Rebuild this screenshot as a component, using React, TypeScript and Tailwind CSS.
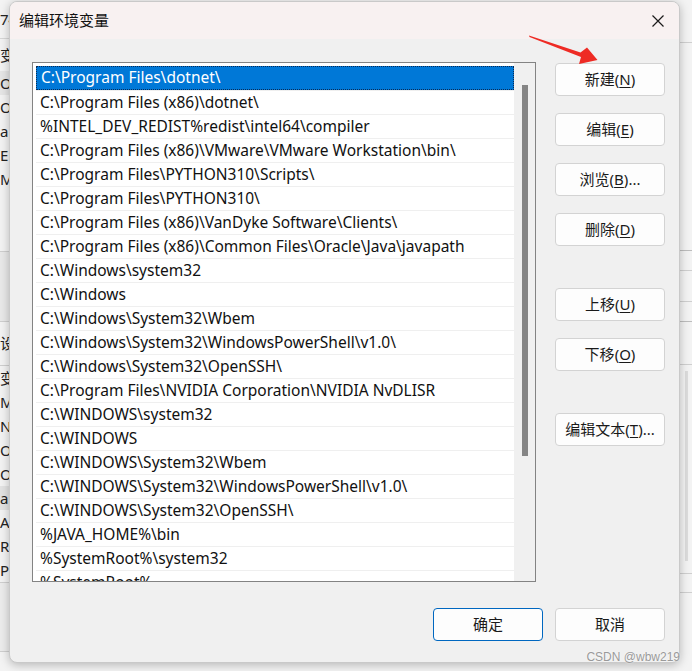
import React from 'react';

const paths = [
  'C:\\Program Files\\dotnet\\',
  'C:\\Program Files (x86)\\dotnet\\',
  '%INTEL_DEV_REDIST%redist\\intel64\\compiler',
  'C:\\Program Files (x86)\\VMware\\VMware Workstation\\bin\\',
  'C:\\Program Files\\PYTHON310\\Scripts\\',
  'C:\\Program Files\\PYTHON310\\',
  'C:\\Program Files (x86)\\VanDyke Software\\Clients\\',
  'C:\\Program Files (x86)\\Common Files\\Oracle\\Java\\javapath',
  'C:\\Windows\\system32',
  'C:\\Windows',
  'C:\\Windows\\System32\\Wbem',
  'C:\\Windows\\System32\\WindowsPowerShell\\v1.0\\',
  'C:\\Windows\\System32\\OpenSSH\\',
  'C:\\Program Files\\NVIDIA Corporation\\NVIDIA NvDLISR',
  'C:\\WINDOWS\\system32',
  'C:\\WINDOWS',
  'C:\\WINDOWS\\System32\\Wbem',
  'C:\\WINDOWS\\System32\\WindowsPowerShell\\v1.0\\',
  'C:\\WINDOWS\\System32\\OpenSSH\\',
  '%JAVA_HOME%\\bin',
  '%SystemRoot%\\system32',
  '%SystemRoot%',
];

// the slivers of the window behind the dialog
const userVars = ['Or', 'Or', 'a', 'E', 'M'];
const sysVars = ['变量', 'MI', 'NU', 'OP', 'OS', 'a', 'A', 'R', 'P'];

const Btn: React.FC<{ label: string; hot?: string; tail?: string; primary?: boolean; className?: string }> = ({
  label, hot, tail = '', primary, className = '',
}) => (
  <button
    className={`w-[110px] h-[33px] shrink-0 rounded-[4px] bg-[#fdfdfd] text-[15px] text-[#1a1a1a] flex items-center justify-center border ${
      primary ? 'border-[#0067c0]' : 'border-[#d3d3d3]'
    } ${className}`}
  >
    {label}
    {hot && (
      <>
        (<span className="underline underline-offset-2">{hot}</span>){tail}
      </>
    )}
  </button>
);

export default function App() {
  return (
    <div className="relative w-[692px] h-[671px] overflow-hidden bg-[#f0f0f0] font-['Noto_Sans','Noto_Sans_CJK_SC',sans-serif]">
      {/* window behind */}
      <div className="absolute inset-0 bg-[#f3f3f3] flex justify-between text-[15px] text-[#222] leading-none whitespace-nowrap">
        <div className="w-[10px] flex flex-col overflow-hidden">
          <div className="h-[39px] shrink-0 border-b border-[#d6d6d6] flex items-center">74</div>
          <div className="h-[32px] shrink-0 flex items-center">变量</div>
          {userVars.map((v, i) => (
            <div key={i} className={`h-[24px] shrink-0 flex items-center ${i === 0 ? 'bg-[#e6e6e6]' : ''}`}>
              {v}
            </div>
          ))}
          <div className="h-[61px] shrink-0 border-b border-[#cfcfcf]" />
          <div className="h-[70px] shrink-0 bg-[#e9e9e9] border-b border-[#cfcfcf]" />
          <div className="h-[44px] shrink-0 border-b border-[#cfcfcf] flex items-center">设置</div>
          {sysVars.map((v, i) => (
            <div key={i} className={`h-[24px] shrink-0 flex items-center ${i === 5 ? 'bg-[#e3e3e3]' : ''}`}>
              {v}
            </div>
          ))}
          <div className="h-[70px] shrink-0 border-y border-[#cfcfcf] bg-[#ececec]" />
        </div>
        <div className="w-[14px] flex flex-col">
          <div className="h-[43px] shrink-0 border-b border-[#cfcfcf]" />
          <div className="h-[208px] shrink-0 border-b border-[#bdbdbd]" />
          <div className="h-[20px] shrink-0 border-b border-[#cfcfcf]" />
          <div className="h-[31px] shrink-0 border-b border-[#cfcfcf]" />
          <div className="h-[20px] shrink-0 border-b border-[#bdbdbd]" />
          <div className="h-[43px] shrink-0 border-b border-[#cfcfcf]" />
          <div className="h-[208px] shrink-0 flex justify-end pr-[4px] pt-[6px]">
            <div className="w-[3px] h-[190px] bg-[#dcdcdc]" />
          </div>
          <div className="h-[20px] shrink-0 border-t border-b border-[#cfcfcf]" />
        </div>
      </div>

      {/* dialog */}
      <div className="absolute left-[9px] top-[1px] w-[671px] h-[662px] rounded-[8px] bg-[#f0f0f0] border border-[#c9c9c9] shadow-[0_2px_10px_rgba(0,0,0,0.25)] flex flex-col overflow-hidden">
        <div className="h-[37px] shrink-0 bg-[#f8f1f1] flex items-center justify-between pl-[9px] pr-[8px]">
          <span className="text-[15px] text-[#111] font-['Noto_Sans_CJK_SC',sans-serif]">编辑环境变量</span>
          <svg width="30" height="30" viewBox="0 0 30 30" className="mr-[-2px]">
            <path d="M9.5 9.5 L20.5 20.5 M20.5 9.5 L9.5 20.5" stroke="#1b1b1b" strokeWidth="1.2" fill="none" />
          </svg>
        </div>

        <div className="flex pl-[22px] pt-[23px]">
          {/* list */}
          <div className="w-[504px] h-[520px] bg-white border border-[#838383] flex pl-[3px] pt-[3px] overflow-hidden">
            <div className="flex-1 flex flex-col overflow-hidden">
              {paths.map((p, i) => (
                <div
                  key={i}
                  className={`h-[24px] shrink-0 pl-[4px] flex items-center text-[15.5px] leading-none whitespace-nowrap ${
                    i === 0
                      ? 'bg-[#0078d7] text-white border border-dotted border-[#0a2a55]'
                      : 'text-[#111] border-t border-[#efefef]'
                  }`}
                >
                  {p}
                </div>
              ))}
            </div>
            <div className="w-[21px] shrink-0 bg-[#f0f0f0] -mt-[3px] pt-[22px] flex justify-center">
              <div className="w-[6px] h-[371px] bg-[#858585]" />
            </div>
          </div>

          {/* side buttons */}
          <div className="ml-[19px] pt-[1px] flex flex-col">
            <Btn label="新建" hot="N" />
            <Btn label="编辑" hot="E" className="mt-[17px]" />
            <Btn label="浏览" hot="B" tail="..." className="mt-[17px]" />
            <Btn label="删除" hot="D" className="mt-[17px]" />
            <Btn label="上移" hot="U" className="mt-[42px]" />
            <Btn label="下移" hot="O" className="mt-[17px]" />
            <Btn label="编辑文本" hot="T" tail="..." className="mt-[42px]" />
          </div>
        </div>

        <div className="flex justify-end gap-[12px] pr-[14px] pt-[26px]">
          <Btn label="确定" primary />
          <Btn label="取消" />
        </div>
      </div>

      {/* red arrow annotation */}
      <svg className="absolute left-0 top-0 pointer-events-none" width="692" height="671">
        <polygon
          points="529,35.5 580.5,52.5 587,47.5 597.5,60 579,64 581,57 529.5,37"
          fill="#ee2b24"
        />
      </svg>

      {/* watermark */}
      <span className="absolute right-[12px] top-[649px] text-[12px] leading-[16px] text-[#9a9a9a] font-['Liberation_Sans',sans-serif] [text-shadow:0_0_2px_#fff]">
        CSDN @wbw219
      </span>
    </div>
  );
}
